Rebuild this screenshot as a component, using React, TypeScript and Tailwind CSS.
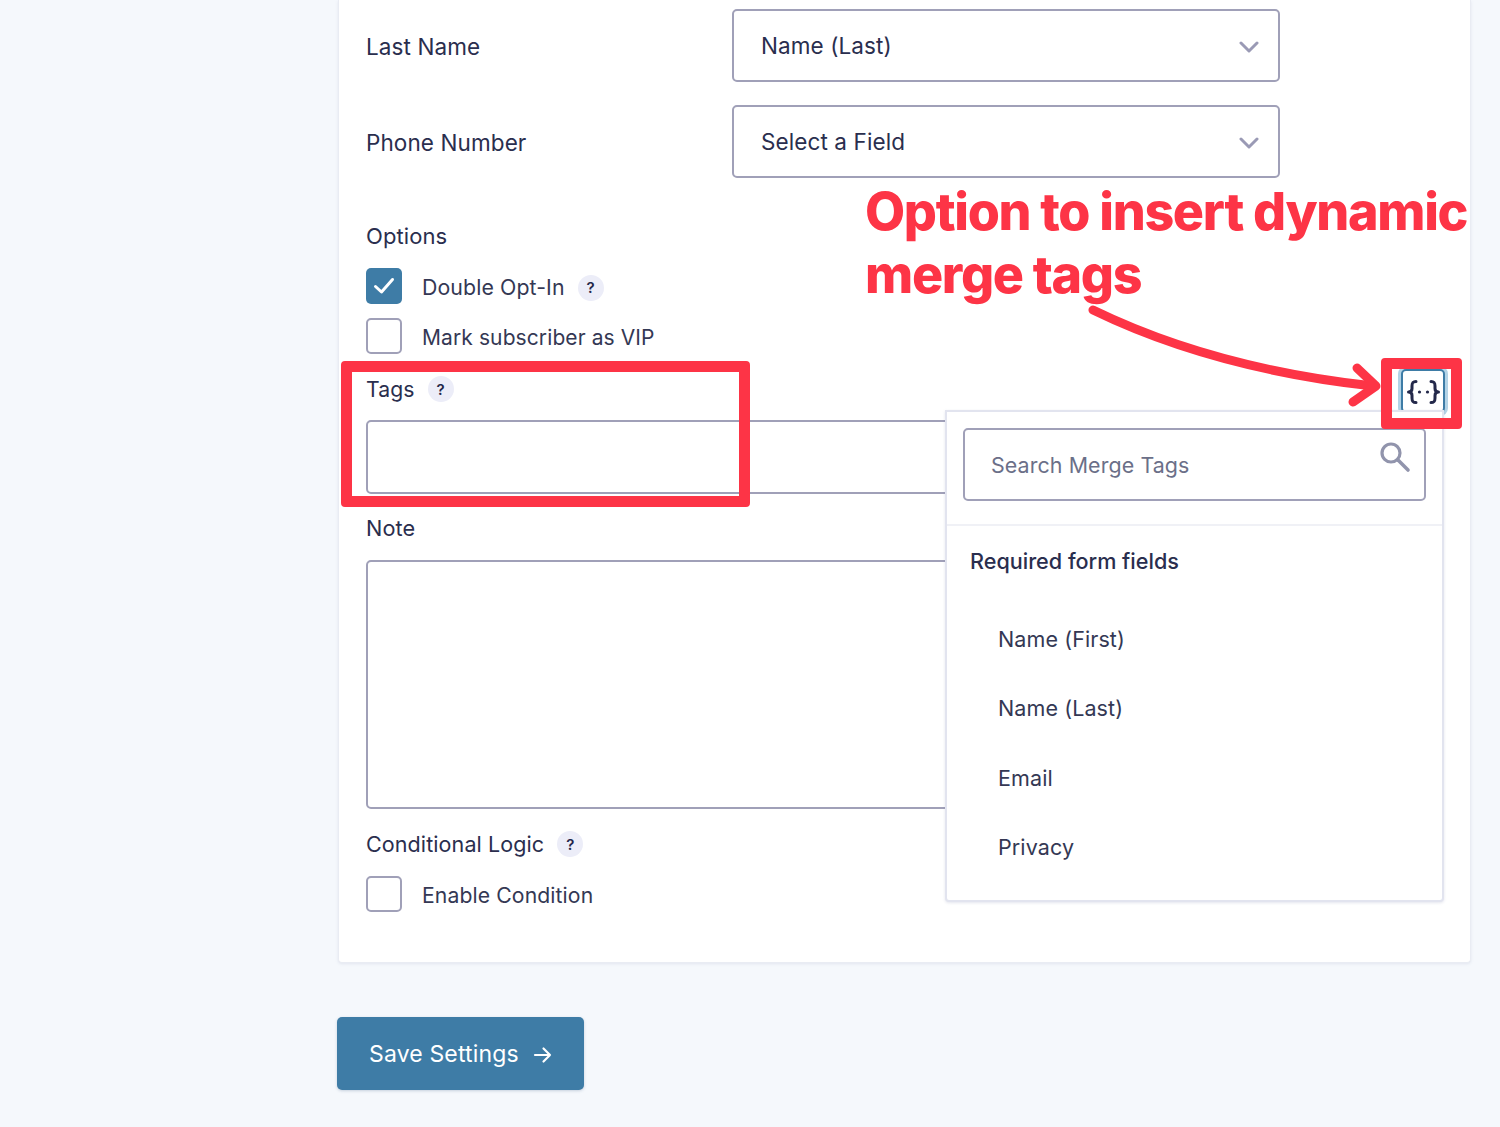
import React from "react";

const font = { fontFamily: "Inter, 'Noto Sans', sans-serif" };

function Chevron() {
  return (
    <svg width="20" height="12" viewBox="0 0 20 12" fill="none" className="mr-[-1px] mt-[2px] shrink-0">
      <path d="M2 2 L10 10 L18 2" stroke="#9a9ab5" strokeWidth="3" strokeLinecap="round" strokeLinejoin="round" />
    </svg>
  );
}

function Help() {
  return (
    <span className="flex h-[26px] w-[26px] shrink-0 items-center justify-center rounded-full bg-[#ecedf8] text-[15px] font-semibold leading-none text-[#23264a]">
      ?
    </span>
  );
}

function SelectRow({ label, value, mt }: { label: string; value: string; mt: string }) {
  return (
    <div className={`flex items-center ${mt}`}>
      <div className="w-[366px] shrink-0 pt-[3px] text-[22.5px] leading-[32px] tracking-[0.1px] text-[#2a2e4e]">{label}</div>
      <div className="flex h-[73px] w-[548px] items-center justify-between rounded-[5px] border-2 border-[#a0a0b8] bg-white pl-[27px] pr-[20px] text-[22.5px] tracking-[0.1px] text-[#2a2e4e]">
        <span className="pt-[1px]">{value}</span>
        <Chevron />
      </div>
    </div>
  );
}

function Check({ checked, label, help, size }: { checked?: boolean; label: string; help?: boolean; size: string }) {
  return (
    <div className="flex h-[36px] items-center">
      <span
        className={
          checked
            ? "flex h-[36px] w-[36px] items-center justify-center rounded-[5px] bg-[#3e7ca6]"
            : "h-[36px] w-[36px] rounded-[5px] border-2 border-[#a0a0b8] bg-white"
        }
      >
        {checked && (
          <svg width="22" height="18" viewBox="0 0 22 18" fill="none">
            <path d="M2.5 9.5 L8.5 15 L19.5 2.5" stroke="#fff" strokeWidth="3" strokeLinecap="round" strokeLinejoin="round" />
          </svg>
        )}
      </span>
      <span className={`ml-[20px] pt-[3px] tracking-[0.1px] text-[#343854] ${size}`}>{label}</span>
      {help && (
        <span className="ml-[13px] mt-[3px]">
          <Help />
        </span>
      )}
    </div>
  );
}

function MergeItem({ children }: { children: React.ReactNode }) {
  return <div className="h-[69.5px] pl-[51px] text-[21.5px] leading-[32px] tracking-[0.1px] text-[#343854]">{children}</div>;
}

export default function App() {
  return (
    <div style={font} className="relative h-[1127px] w-full overflow-hidden bg-[#f5f8fc] pl-[338px] pr-[29px]">
      <div className="h-[963px] rounded-b-[4px] border-x border-b border-[#e9ecf3] bg-white px-[27px] pt-[9px] shadow-[0_1px_3px_rgba(120,130,170,0.15)]">
        <SelectRow label="Last Name" value="Name (Last)" mt="mt-0" />
        <SelectRow label="Phone Number" value="Select a Field" mt="mt-[23px]" />

        <div className="mt-[42px] text-[22px] leading-[32px] tracking-[0.1px] text-[#2a2e4e]">Options</div>
        <div className="mt-[16px] flex flex-col gap-[14px]">
          <Check checked label="Double Opt-In" help size="text-[21.3px]" />
          <Check label="Mark subscriber as VIP" size="text-[21px]" />
        </div>

        <div className="mt-[19px] flex h-[32px] items-center gap-[13px] text-[21.2px] tracking-[0.1px] text-[#2a2e4e]">
          <span className="pt-[1px]">Tags</span> <Help />
        </div>
        <div className="mt-[15px] h-[74px] w-[1078px] rounded-[5px] border-2 border-[#a0a0b8] bg-white" />

        <div className="mt-[18px] text-[21.7px] leading-[32px] tracking-[0.1px] text-[#2a2e4e]">Note</div>
        <div className="mt-[16px] h-[249px] w-[1078px] rounded-[5px] border-2 border-[#a0a0b8] bg-white" />

        <div className="mt-[19px] flex h-[32px] items-center gap-[13px] text-[21.5px] tracking-[0.1px] text-[#2a2e4e]">
          Conditional Logic <Help />
        </div>
        <div className="mt-[16px]">
          <Check label="Enable Condition" size="text-[21.2px]" />
        </div>
      </div>

      <button className="-ml-px mt-[54px] flex h-[73px] w-[247px] items-center gap-[14px] rounded-[5px] bg-[#3e7ca6] pl-[32px] pt-[2px] text-[23px] tracking-[0.15px] text-white shadow-[0_1px_3px_rgba(60,90,130,0.25)]">
        Save Settings
        <svg width="20" height="18" viewBox="0 0 20 18" fill="none">
          <path d="M2 9 H17 M10.5 2.5 L17 9 L10.5 15.5" stroke="#fff" strokeWidth="2.2" strokeLinecap="round" strokeLinejoin="round" />
        </svg>
      </button>

      {/* merge tag button */}
      <div className="absolute left-[1401px] top-[369px] flex h-[44px] w-[44px] items-center justify-center rounded-[5px] border-2 border-[#3e7ca6] bg-white pt-[2px] shadow-[0_0_0_3px_#b3d3e6]">
        <svg width="33" height="24" viewBox="0 0 33 24" fill="none">
          <path
            d="M9 1.5 C5.5 1.5 5 3 5 6 V8.5 C5 10.5 4 12 1.5 12 C4 12 5 13.5 5 15.5 V18 C5 21 5.5 22.5 9 22.5 M24 1.5 C27.5 1.5 28 3 28 6 V8.5 C28 10.5 29 12 31.5 12 C29 12 28 13.5 28 15.5 V18 C28 21 27.5 22.5 24 22.5"
            stroke="#23284a"
            strokeWidth="3"
            strokeLinecap="round"
            strokeLinejoin="round"
          />
          <circle cx="12.5" cy="12" r="1.6" fill="#23284a" />
          <circle cx="20.5" cy="12" r="1.6" fill="#23284a" />
        </svg>
      </div>

      {/* merge tag popup */}
      <div className="absolute left-[945px] top-[410px] h-[492px] w-[499px] rounded-b-[4px] border-2 border-[#e2e4ef] bg-white shadow-[0_1px_3px_rgba(120,130,170,0.2)]">
        <div className="h-[114px] border-b-2 border-[#f0f1f6] px-[16px] pt-[16px]">
          <div className="flex h-[73px] w-[463px] items-start justify-between rounded-[5px] border-2 border-[#a0a0b8] bg-white pl-[26px] pr-[13px]">
            <span className="mt-[19px] text-[21.4px] leading-[32px] tracking-[0.1px] text-[#6b6f88]">Search Merge Tags</span>
            <svg width="32" height="32" viewBox="0 0 32 32" fill="none" className="mt-[11px]">
              <circle cx="12" cy="12" r="9" stroke="#9194ac" strokeWidth="3.2" />
              <path d="M19 19 L29 29" stroke="#9194ac" strokeWidth="3.6" strokeLinecap="round" />
            </svg>
          </div>
        </div>
        <div className="ml-[23px] mt-[19px] text-[21.6px] font-medium leading-[32px] text-[#2a2e4e]">Required form fields</div>
        <div className="mt-[45.5px]">
          <MergeItem>Name (First)</MergeItem>
          <MergeItem>Name (Last)</MergeItem>
          <MergeItem>Email</MergeItem>
          <MergeItem>Privacy</MergeItem>
        </div>
      </div>

      {/* annotation layer */}
      <div className="absolute left-[341px] top-[361px] h-[146px] w-[409px] rounded-[4px] border-[11px] border-[#fd3446]" />
      <div className="absolute left-[1381px] top-[358px] h-[71px] w-[81px] rounded-[4px] border-[11px] border-[#fd3446]" />
      <svg className="absolute left-[1085px] top-[300px]" width="300" height="110" viewBox="0 0 300 110" fill="none">
        <path d="M8 10 C80 45 170 73 288 86" stroke="#fd3446" strokeWidth="9" strokeLinecap="round" />
        <path d="M272 68 L291 86 L268 102" stroke="#fd3446" strokeWidth="9" strokeLinecap="round" strokeLinejoin="round" />
      </svg>
      <div className="absolute left-[865px] top-[180px] whitespace-nowrap text-[52px] font-extrabold leading-[63px] tracking-[-1.32px] text-[#fd3446]">
        Option to insert dynamic
        <br />
        merge tags
      </div>
    </div>
  );
}
